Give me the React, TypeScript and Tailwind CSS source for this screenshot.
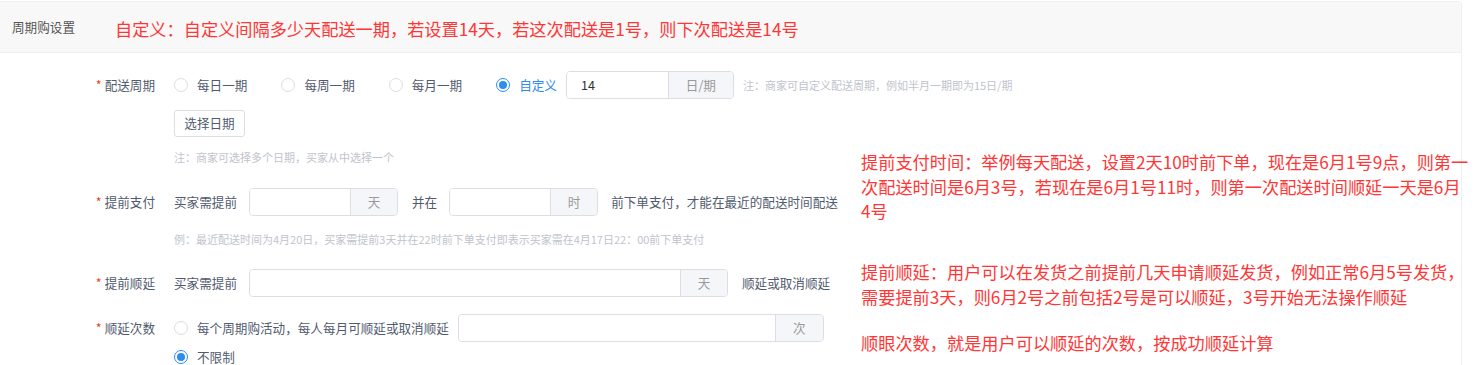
import React from "react";

const F = { fontFamily: '"Noto Sans CJK SC", "Noto Sans", sans-serif' };

function Radio({ checked, label, blue }: { checked?: boolean; label: string; blue?: boolean }) {
  return (
    <label className="flex items-center gap-[9px]">
      <span
        className={
          "flex h-[14px] w-[14px] items-center justify-center rounded-full border bg-white " +
          (checked ? "border-[#2d8cf0]" : "border-[#dcdee2]")
        }
      >
        {checked && <span className="h-[8px] w-[8px] rounded-full bg-[#2d8cf0]" />}
      </span>
      <span className={blue ? "text-[#2d8cf0]" : "text-[#515a6e]"}>{label}</span>
    </label>
  );
}

function InputGroup({ value, suffix, mainW, sufW }: { value?: string; suffix: string; mainW: string; sufW: string }) {
  return (
    <div className="flex h-[28px] overflow-hidden rounded-[4px] border border-[#dcdee2]">
      <div className={"flex items-center bg-white pl-[14px] text-[#333] " + mainW}>{value}</div>
      <div className={"flex items-center justify-center border-l border-[#dcdee2] bg-[#f5f6f9] text-[#999] " + sufW}>
        {suffix}
      </div>
    </div>
  );
}

function Label({ text }: { text: string }) {
  return (
    <div className="flex h-[28px] w-[174px] shrink-0 items-center justify-end pr-[19px] text-[#515a6e]">
      <span className="mr-[3px] text-[#ed4014]">*</span>
      {text}
    </div>
  );
}

export default function App() {
  return (
    <div className="relative h-[365px] w-[1474px] overflow-hidden bg-white" style={F}>
      <div className="mt-px w-[1462px] rounded-tr-[4px] border-r border-t border-[#eeeff3]">
        <div className="flex h-[51px] items-center border-b border-[#efeff4] bg-[#f8f8f8]">
          <div className="pl-[12px] pr-[40px] text-[12.6px] text-[#555]">周期购设置</div>
          <div className="mt-[3px] text-[17.2px] text-[#ff3636]">
            自定义：自定义间隔多少天配送一期，若设置14天，若这次配送是1号，则下次配送是14号
          </div>
        </div>

        <div className="pb-10 pt-[18px] text-[12.6px]">
          {/* row 1 */}
          <div className="flex">
            <Label text="配送周期" />
            <div className="flex flex-col">
              <div className="flex h-[28px] items-center">
                <div className="flex items-center gap-[34px]">
                  <Radio label="每日一期" />
                  <Radio label="每周一期" />
                  <Radio label="每月一期" />
                  <Radio label="自定义" checked blue />
                </div>
                <div className="ml-[9px]">
                  <InputGroup value="14" suffix="日/期" mainW="w-[101px]" sufW="w-[65px]" />
                </div>
                <div className="ml-[9px] text-[11px] text-[#c0c4cc]">注：商家可自定义配送周期，例如半月一期即为15日/期</div>
              </div>
              <div className="mt-[11px]">
                <button className="h-[27px] w-[71px] rounded-[3px] border border-[#dcdee2] bg-white text-[12.6px] text-[#515a6e]">
                  选择日期
                </button>
              </div>
              <div className="mt-[12px] h-[16px] text-[11px] leading-[16px] text-[#c0c4cc]">注：商家可选择多个日期，买家从中选择一个</div>
            </div>
          </div>

          {/* row 2 */}
          <div className="mt-[23px] flex">
            <Label text="提前支付" />
            <div className="flex flex-col">
              <div className="flex h-[28px] items-center text-[#515a6e]">
                <span>买家需提前</span>
                <div className="ml-[12px]">
                  <InputGroup suffix="天" mainW="w-[100px]" sufW="w-[47px]" />
                </div>
                <span className="ml-[14px]">并在</span>
                <div className="ml-[12px]">
                  <InputGroup suffix="时" mainW="w-[100px]" sufW="w-[47px]" />
                </div>
                <span className="ml-[13px]">前下单支付，才能在最近的配送时间配送</span>
              </div>
              <div className="mt-[15px] h-[16px] text-[11px] leading-[16px] text-[#c0c4cc]">
                例：最近配送时间为4月20日，买家需提前3天并在22时前下单支付即表示买家需在4月17日22：00前下单支付
              </div>
            </div>
          </div>

          {/* row 3 */}
          <div className="mt-[22px] flex">
            <Label text="提前顺延" />
            <div className="flex h-[28px] items-center text-[#515a6e]">
              <span>买家需提前</span>
              <div className="ml-[12px]">
                <InputGroup suffix="天" mainW="w-[430px]" sufW="w-[47px]" />
              </div>
              <span className="ml-[14px]">顺延或取消顺延</span>
            </div>
          </div>

          {/* row 4 */}
          <div className="mt-[17px] flex">
            <Label text="顺延次数" />
            <div className="flex flex-col">
              <div className="flex h-[28px] items-center">
                <Radio label="每个周期购活动，每人每月可顺延或取消顺延" />
                <div className="ml-[9px]">
                  <InputGroup suffix="次" mainW="w-[316px]" sufW="w-[48px]" />
                </div>
              </div>
              <div className="mt-[5px] flex h-[20px] items-center">
                <Radio label="不限制" checked />
              </div>
            </div>
          </div>
        </div>
      </div>

      {/* annotations */}
      <div className="absolute left-[861px] top-[150px] text-[17.2px] leading-[24.5px] text-[#ff3636]">
        <div>提前支付时间：举例每天配送，设置2天10时前下单，现在是6月1号9点，则第一</div>
        <div>次配送时间是6月3号，若现在是6月1号11时，则第一次配送时间顺延一天是6月</div>
        <div>4号</div>
      </div>
      <div className="absolute left-[861px] top-[259px] text-[17.2px] leading-[25px] text-[#ff3636]">
        <div>提前顺延：用户可以在发货之前提前几天申请顺延发货，例如正常6月5号发货，</div>
        <div>需要提前3天，则6月2号之前包括2号是可以顺延，3号开始无法操作顺延</div>
        <div className="mt-[21px]">顺眼次数，就是用户可以顺延的次数，按成功顺延计算</div>
      </div>
    </div>
  );
}
